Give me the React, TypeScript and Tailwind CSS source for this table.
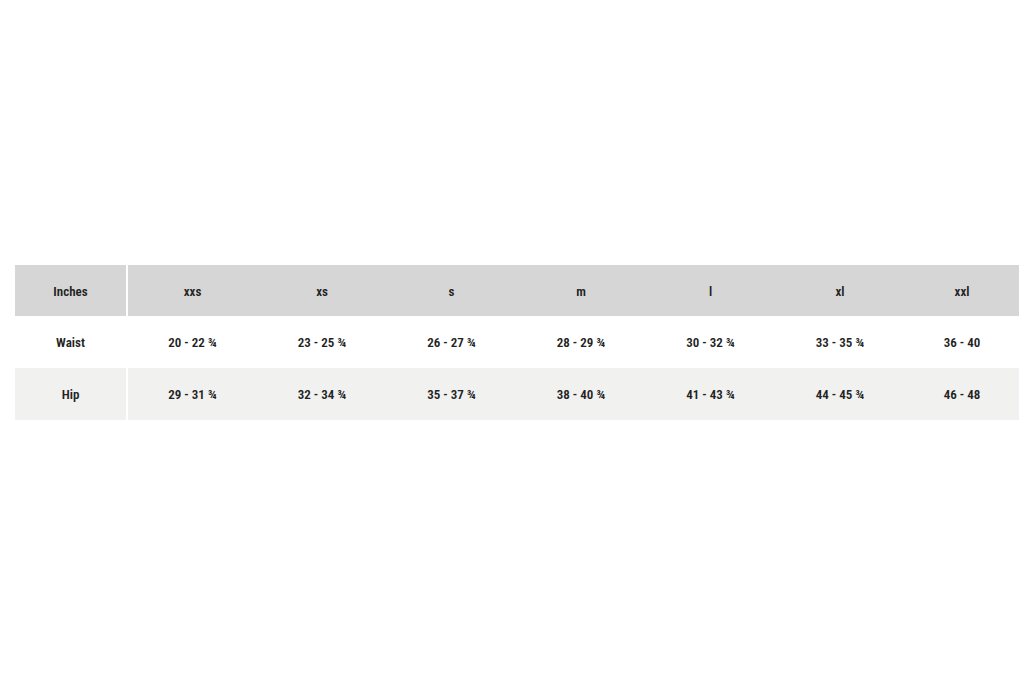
const sizes = ["xxs", "xs", "s", "m", "l", "xl", "xxl"];

const rows = [
  { label: "Waist", values: ["20 - 22 ¾", "23 - 25 ¾", "26 - 27 ¾", "28 - 29 ¾", "30 - 32 ¾", "33 - 35 ¾", "36 - 40"], bg: "bg-white" },
  { label: "Hip", values: ["29 - 31 ¾", "32 - 34 ¾", "35 - 37 ¾", "38 - 40 ¾", "41 - 43 ¾", "44 - 45 ¾", "46 - 48"], bg: "bg-[#f1f1ef]" },
];

const colWidths = ["w-[129px]", "w-[130px]", "w-[129px]", "w-[130px]", "w-[129px]", "w-[130px]", "flex-1"];

export default function App() {
  return (
    <div className="w-[1024px] h-[683px] bg-white pt-[265px] px-[15px] font-['Roboto_Condensed',Roboto,sans-serif] font-stretch-condensed text-[13px] font-semibold text-[#222]">
      <div className="flex flex-col w-[1004px]">
        <div className="flex h-[51px] gap-[2px]">
          <div className="w-[111px] bg-[#d6d6d6] flex items-center justify-center pt-[2px]">Inches</div>
          <div className="flex-1 flex bg-[#d6d6d6]">
            {sizes.map((s, i) => (
              <div key={s} className={`${colWidths[i]} flex items-center justify-center pt-[2px]`}>
                {s}
              </div>
            ))}
          </div>
        </div>
        {rows.map((r) => (
          <div key={r.label} className="flex h-[52px] gap-[2px]">
            <div className={`w-[111px] ${r.bg} flex items-center justify-center pt-[2px]`}>{r.label}</div>
            <div className={`flex-1 flex ${r.bg}`}>
              {r.values.map((v, i) => (
                <div key={i} className={`${colWidths[i]} flex items-center justify-center pt-[2px]`}>
                  {v}
                </div>
              ))}
            </div>
          </div>
        ))}
      </div>
    </div>
  );
}
